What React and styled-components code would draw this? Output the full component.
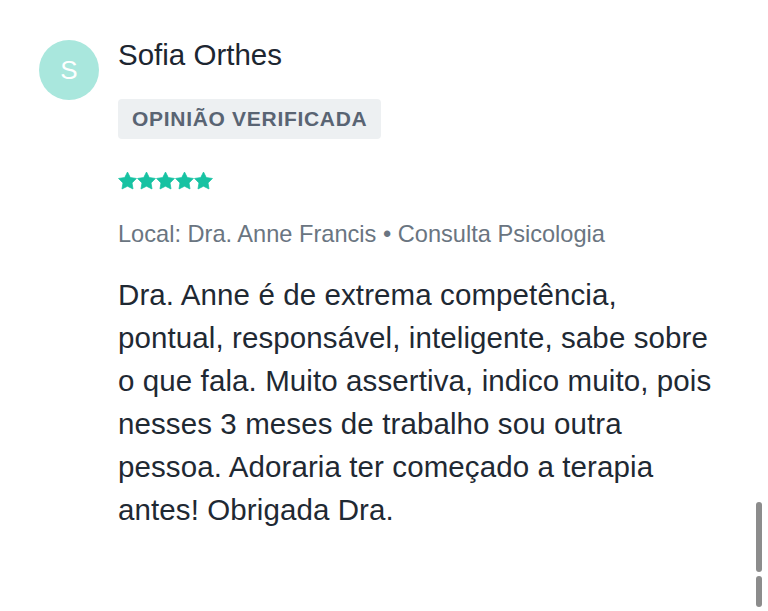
import React from 'react';
import styled, { createGlobalStyle } from 'styled-components';

const GlobalStyle = createGlobalStyle`
  html, body {
    margin: 0;
    padding: 0;
    background: #ffffff;
  }
  body {
    font-family: "Liberation Sans", Arial, sans-serif;
    -webkit-font-smoothing: antialiased;
  }
`;

const Page = styled.div`
  position: relative;
  width: 768px;
  height: 611px;
  overflow: hidden;
  background: #fff;
`;

const Review = styled.div`
  display: flex;
  align-items: flex-start;
  gap: 19px;
  padding: 37px 0 0 39px;
`;

const Avatar = styled.div`
  width: 60px;
  height: 60px;
  margin-top: 3px;
  border-radius: 50%;
  background: #a9e7dd;
  color: #fff;
  display: flex;
  align-items: center;
  justify-content: center;
  font-size: 26px;
  flex-shrink: 0;
`;

const Body = styled.div`
  display: flex;
  flex-direction: column;
  align-items: flex-start;
`;

const Name = styled.div`
  font-size: 29.5px;
  line-height: 35px;
  color: #1d2631;
`;

const Badge = styled.div`
  margin-top: 27px;
  height: 40px;
  padding: 0 14px;
  display: flex;
  align-items: center;
  background: #edf0f2;
  border-radius: 4px;
  color: #596473;
  font-weight: 700;
  font-size: 21px;
  letter-spacing: 0.7px;
`;

const Stars = styled.div`
  display: flex;
  margin-top: 32px;
`;

const Local = styled.div`
  margin-top: 30px;
  font-size: 23.6px;
  line-height: 28px;
  color: #6a7581;
`;

const Text = styled.p`
  margin: 25px 0 0;
  font-size: 29.5px;
  line-height: 43px;
  letter-spacing: 0.1px;
  color: #1f2933;
  white-space: pre-line;
`;

const ScrollPiece = styled.div`
  position: absolute;
  right: 6px;
  width: 6px;
  border-radius: 3px;
  background: #8c8c8c;
  top: ${({ top }) => top}px;
  height: ${({ h }) => h}px;
`;

const Star = () => (
  <svg width="19" height="19" viewBox="0 0 20 19">
    <path
      fill="#17c2a2"
      stroke="#17c2a2"
      strokeWidth="0.8"
      strokeLinejoin="round"
      d="M10 0.6L12.94 6.45 19.4 7.35 14.76 12.05 15.8 18.4 10 15.5 4.2 18.4 5.24 12.05 0.6 7.35 7.06 6.45Z"
    />
  </svg>
);

const reviewText = `Dra. Anne é de extrema competência,
pontual, responsável, inteligente, sabe sobre
o que fala. Muito assertiva, indico muito, pois
nesses 3 meses de trabalho sou outra
pessoa. Adoraria ter começado a terapia
antes! Obrigada Dra.`;

export default function App() {
  return (
    <Page>
      <GlobalStyle />
      <Review>
        <Avatar>S</Avatar>
        <Body>
          <Name>Sofia Orthes</Name>
          <Badge>OPINIÃO VERIFICADA</Badge>
          <Stars>
            {[0, 1, 2, 3, 4].map((i) => (
              <Star key={i} />
            ))}
          </Stars>
          <Local>Local: Dra. Anne Francis • Consulta Psicologia</Local>
          <Text>{reviewText}</Text>
        </Body>
      </Review>
      <ScrollPiece top={502} h={70} />
      <ScrollPiece top={576} h={31} />
    </Page>
  );
}
